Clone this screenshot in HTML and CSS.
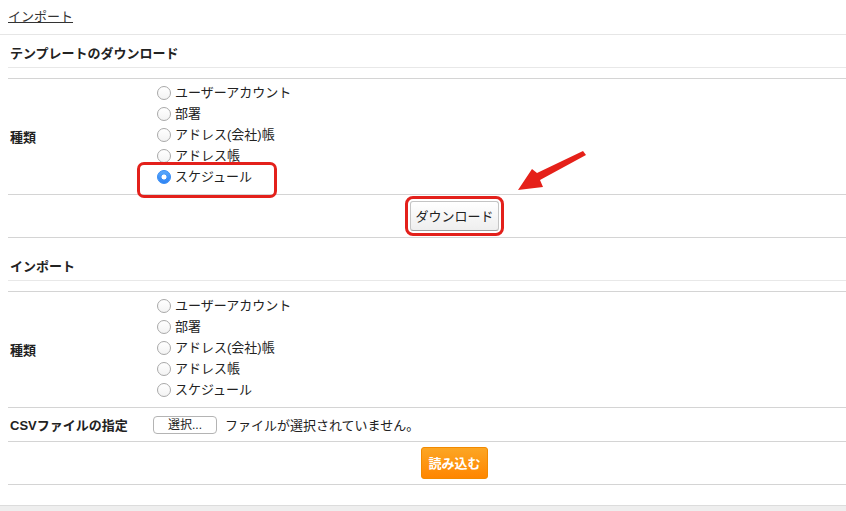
FILE: index.html
```html
<!DOCTYPE html>
<html lang="ja">
<head>
<meta charset="utf-8">
<title>インポート</title>
<link rel="stylesheet" href="styles.css">
</head>
<body>
<div class="page">
  <nav class="topnav"><a href="#" class="crumb">インポート</a></nav>

  <main class="content">
    <section class="sect">
      <h2 class="sect-title">テンプレートのダウンロード</h2>
      <table class="form">
        <tr>
          <th class="label">種類</th>
          <td class="field">
            <ul class="radios">
              <li><label class="radio"><input type="radio" name="tpl"><span>ユーザーアカウント</span></label></li>
              <li><label class="radio"><input type="radio" name="tpl"><span>部署</span></label></li>
              <li><label class="radio"><input type="radio" name="tpl"><span>アドレス(会社)帳</span></label></li>
              <li><label class="radio"><input type="radio" name="tpl"><span>アドレス帳</span></label></li>
              <li><label class="radio"><input type="radio" name="tpl" checked><span>スケジュール</span></label></li>
            </ul>
          </td>
        </tr>
        <tr>
          <td class="actions" colspan="2"><button class="btn btn-plain btn-marked" type="button">ダウンロード</button></td>
        </tr>
      </table>
    </section>

    <section class="sect sect-next">
      <h2 class="sect-title">インポート</h2>
      <table class="form">
        <tr>
          <th class="label">種類</th>
          <td class="field">
            <ul class="radios">
              <li><label class="radio"><input type="radio" name="imp"><span>ユーザーアカウント</span></label></li>
              <li><label class="radio"><input type="radio" name="imp"><span>部署</span></label></li>
              <li><label class="radio"><input type="radio" name="imp"><span>アドレス(会社)帳</span></label></li>
              <li><label class="radio"><input type="radio" name="imp"><span>アドレス帳</span></label></li>
              <li><label class="radio"><input type="radio" name="imp"><span>スケジュール</span></label></li>
            </ul>
          </td>
        </tr>
        <tr class="row-file">
          <th class="label">CSVファイルの指定</th>
          <td class="field">
            <div class="file">
              <button class="file-btn" type="button">選択...</button>
              <span class="file-name">ファイルが選択されていません。</span>
            </div>
          </td>
        </tr>
        <tr>
          <td class="actions actions-import" colspan="2"><button class="btn btn-orange" type="button">読み込む</button></td>
        </tr>
      </table>
    </section>
  </main>

  <footer class="footer"></footer>

  <div class="mark mark-schedule"></div>
  <svg class="arrow" width="85" height="50" viewBox="0 0 85 50" aria-hidden="true">
    <polygon points="8,45 22,24 27,28 73,6 76,10 30,35 33,42" fill="#e52019"/>
  </svg>
</div>
</body>
</html>
```

FILE: styles.css
```css
* { box-sizing: border-box; }

html, body {
  margin: 0;
  padding: 0;
  background: #fff;
}

body {
  font-family: "Liberation Sans", "Noto Sans CJK JP", sans-serif;
  font-size: 13px;
  color: #222;
}

.page {
  position: relative;
  width: 846px;
  height: 511px;
  overflow: hidden;
  display: flex;
  flex-direction: column;
}

.topnav {
  padding: 8px 8px 9px;
  line-height: 17px;
  border-bottom: 1px solid #e6e6e6;
}

.crumb {
  color: #333;
  text-decoration: underline;
}

.content {
  padding-left: 8px;
  padding-bottom: 20px;
}

.sect-title {
  margin: 0;
  padding: 10px 0 5px 2px;
  font-size: 13px;
  line-height: 17px;
  font-weight: bold;
  border-bottom: 1px solid #e8e8e8;
}

.sect-next {
  margin-top: 10px;
}

.form {
  width: 100%;
  margin-top: 10px;
  border-collapse: collapse;
  border-top: 1px solid #d4d4d4;
}

.form tr {
  border-bottom: 1px solid #d4d4d4;
}

.label {
  width: 145px;
  padding: 0 0 0 2px;
  text-align: left;
  vertical-align: middle;
  font-weight: bold;
  white-space: nowrap;
}

.field {
  padding: 3px 0 7px;
  vertical-align: middle;
}

.radios {
  list-style: none;
  margin: 0;
  padding: 0;
}

.radio {
  display: flex;
  align-items: center;
  height: 21px;
  line-height: 21px;
}

.radio input {
  appearance: none;
  -webkit-appearance: none;
  width: 14px;
  height: 14px;
  margin: 0 4px 0 4px;
  border: 1px solid #a9a9a9;
  border-radius: 50%;
  background: linear-gradient(#fff, #f3f3f3);
  flex: none;
}

.radio input:checked {
  border-color: #3a8ef5;
  background: radial-gradient(circle, #fff 0 2.2px, transparent 2.8px), linear-gradient(#5aa9fb, #2f83f3);
}

.actions {
  height: 43px;
  padding: 0 0 0 55px;
  text-align: center;
  vertical-align: middle;
}

.btn {
  font-family: inherit;
  font-size: 13px;
  line-height: 17px;
  cursor: pointer;
}

.btn-plain {
  height: 30px;
  padding: 0 4px;
  color: #222;
  background: linear-gradient(#ffffff, #eeeeee);
  border: 1px solid #c4c4c4;
  border-bottom-color: #9f9f9f;
  border-radius: 3px;
}

.btn-marked {
  outline: 3px solid #e3201b;
  outline-offset: 2px;
}

.btn-orange {
  height: 32px;
  padding: 0 6px;
  color: #fff;
  font-weight: bold;
  background: linear-gradient(#fca624, #ff8600);
  border: 1px solid #f28a00;
  border-radius: 3px;
}

.row-file .field {
  height: 34px;
  padding: 0;
}

.file {
  display: flex;
  align-items: center;
}

.file-btn {
  width: 64px;
  height: 18px;
  padding: 0;
  font-family: inherit;
  font-size: 12px;
  line-height: 16px;
  color: #222;
  background: #fff;
  border: 1px solid #b4b4b4;
  border-radius: 4px;
}

.file-name {
  margin-left: 8px;
}

.footer {
  flex: 1;
  background: #eeeeee;
  border-top: 1px solid #dcdcdc;
}

.mark {
  position: absolute;
  border: 3px solid #e3201b;
  border-radius: 7px;
  pointer-events: none;
}

.mark-schedule {
  left: 137px;
  top: 162px;
  width: 140px;
  height: 36px;
}

.arrow {
  position: absolute;
  left: 510px;
  top: 145px;
  pointer-events: none;
}
```
